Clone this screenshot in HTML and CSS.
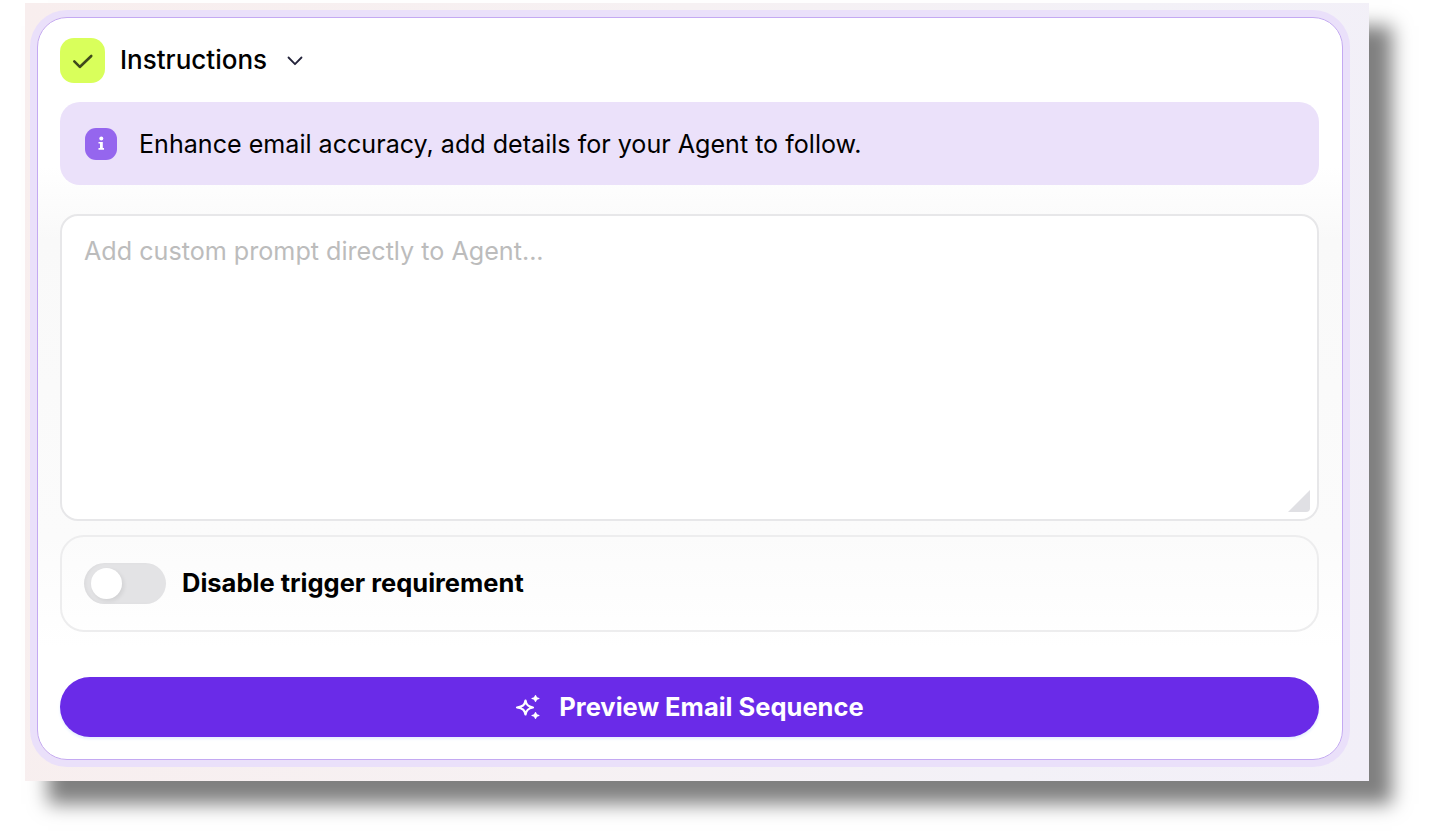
FILE: index.html
```html
<!DOCTYPE html>
<html lang="en">
<head>
    <meta charset="UTF-8">
    <meta name="viewport" content="width=device-width, initial-scale=1.0">
    <title>Instructions</title>
    <link rel="stylesheet" href="styles.css">
</head>
<body>
    <div class="frame">
        <div class="card">
            <div class="header">
                <span class="check">
                    <svg width="22" height="22" viewBox="0 0 24 24" fill="none" stroke="#3f4a1c" stroke-width="2.800" stroke-linecap="round" stroke-linejoin="round"><path d="M2.500 12.500 8.500 18.500 21 6.500"/></svg>
                </span>
                <span class="title">Instructions</span>
                <svg class="chevron" width="16" height="10" viewBox="0 0 16 10" fill="none" stroke="#23233a" stroke-width="1.800" stroke-linecap="round" stroke-linejoin="round"><path d="M1.500 1.500 8 8.200 14.500 1.500"/></svg>
            </div>
            <div class="notice">
                <span class="info">
                    <svg width="12" height="17" viewBox="0 0 12 16" fill="#fff"><circle cx="6.300" cy="3" r="2"/><path d="M3.500 6.500H7.800V12.400H9V14.200H3.500V12.400H5V8.100H3.500Z"/></svg>
                </span>
                <span>Enhance email accuracy, add details for your Agent to follow.</span>
            </div>
            <div class="prompt">
                <span class="placeholder">Add custom prompt directly to Agent...</span>
                <span class="resize"></span>
            </div>
            <div class="trigger">
                <span class="toggle"><span class="knob"></span></span>
                <span class="trigger-label">Disable trigger requirement</span>
            </div>
            <button class="preview">
                <svg width="27" height="26" viewBox="0 0 27 26" fill="none" stroke="#fff" stroke-width="2.200" stroke-linejoin="round"><path d="M10.500 6.500C11.300 11 13 12.700 18 13.500 13 14.300 11.300 16 10.500 20.500 9.700 16 8 14.300 2 13.500 8 12.700 9.700 11 10.500 6.500Z"/><path fill="#fff" stroke-width="1.200" d="M20.500 1.500C20.900 3.600 21.500 4.200 24 4.500 21.500 4.800 20.900 5.400 20.500 7.500 20.100 5.400 19.500 4.800 17 4.500 19.500 4.200 20.100 3.600 20.500 1.500Z"/><path fill="#fff" stroke-width="1.200" d="M20.500 18.500C20.900 20.600 21.500 21.200 24 21.500 21.500 21.800 20.900 22.400 20.500 24.500 20.100 22.400 19.500 21.800 17 21.500 19.500 21.200 20.100 20.600 20.500 18.500Z"/></svg>
                <span class="preview-label">Preview Email Sequence</span>
            </button>
        </div>
    </div>
</body>
</html>
```

FILE: styles.css
```css
body {
    margin: 0;
    padding: 3px 0 0 25px;
    min-height: 100vh;
    box-sizing: border-box;
    background-color: #ffffff;
    font-family: 'Inter', sans-serif;
    color: #000000;
}

.frame {
    width: 1344px;
    height: 778px;
    box-sizing: border-box;
    padding: 14px 26px 21px 12px;
    background: linear-gradient(100deg, #f8eeee 0%, #f6f1f3 45%, #f3f1f7 75%, #f2eff8 100%);
    box-shadow: 23px 23px 18px rgba(0, 0, 0, 0.5);
}

.card {
    height: 100%;
    box-sizing: border-box;
    padding: 20px 23px 22px 22px;
    display: flex;
    flex-direction: column;
    background: linear-gradient(180deg, #ffffff 20%, #f9f9f9 30%, #fbfbfb 70%, #ffffff 85%);
    border: 1px solid #c4a9f2;
    border-radius: 30px;
    box-shadow: 0 0 0 7px #eae0fa;
}

.header {
    display: flex;
    align-items: center;
    height: 45px;
    margin-bottom: 19px;
}

.check {
    width: 45px;
    height: 45px;
    display: flex;
    align-items: center;
    justify-content: center;
    background-color: #d9ff5b;
    border-radius: 14px;
}

.title {
    margin-left: 15px;
    margin-bottom: 2px;
    font-size: 26px;
    font-weight: 500;
}

.chevron {
    margin-left: 20px;
}

.notice {
    height: 83px;
    display: flex;
    align-items: center;
    padding-left: 25px;
    font-size: 25.1px;
    background-color: #ebe1fa;
    border-radius: 20px;
}

.info {
    width: 32px;
    height: 32px;
    margin-right: 22px;
    display: flex;
    align-items: center;
    justify-content: center;
    background-color: #9566ee;
    border-radius: 11px;
}

.prompt {
    position: relative;
    height: 307px;
    box-sizing: border-box;
    margin-top: 29px;
    padding: 20px 22px;
    font-size: 25.15px;
    line-height: 30px;
    background-color: #ffffff;
    border: 2px solid #e7e7e9;
    border-radius: 18px;
}

.placeholder {
    color: #bcbcbc;
}

.resize {
    position: absolute;
    right: 7px;
    bottom: 7px;
    width: 22px;
    height: 22px;
    background-color: #e0e0e4;
    border-bottom-right-radius: 4px;
    clip-path: polygon(100% 0, 100% 100%, 0 100%);
}

.trigger {
    height: 97px;
    box-sizing: border-box;
    margin-top: 14px;
    padding-left: 22px;
    display: flex;
    align-items: center;
    border: 2px solid #ededee;
    border-radius: 24px;
}

.toggle {
    width: 82px;
    height: 41px;
    box-sizing: border-box;
    padding: 5px 7px;
    background-color: #e3e3e5;
    border-radius: 21px;
    box-shadow: inset 2px 0 3px rgba(0, 0, 0, 0.03);
}

.knob {
    display: block;
    width: 31px;
    height: 31px;
    background-color: #ffffff;
    border-radius: 50%;
    box-shadow: 2px 2px 4px rgba(0, 0, 0, 0.08);
}

.trigger-label {
    margin-left: 16px;
    margin-bottom: 2px;
    font-size: 25.5px;
    font-weight: 700;
}

.preview {
    height: 60px;
    margin-top: auto;
    display: flex;
    align-items: center;
    justify-content: center;
    gap: 17px;
    font-family: inherit;
    font-size: 25.5px;
    font-weight: 700;
    color: #ffffff;
    background-color: #6a2be8;
    border: none;
    border-radius: 30px;
    box-shadow: 0 2px 3px #e6efff;
}

.preview-label {
    margin-bottom: 2px;
}
```
